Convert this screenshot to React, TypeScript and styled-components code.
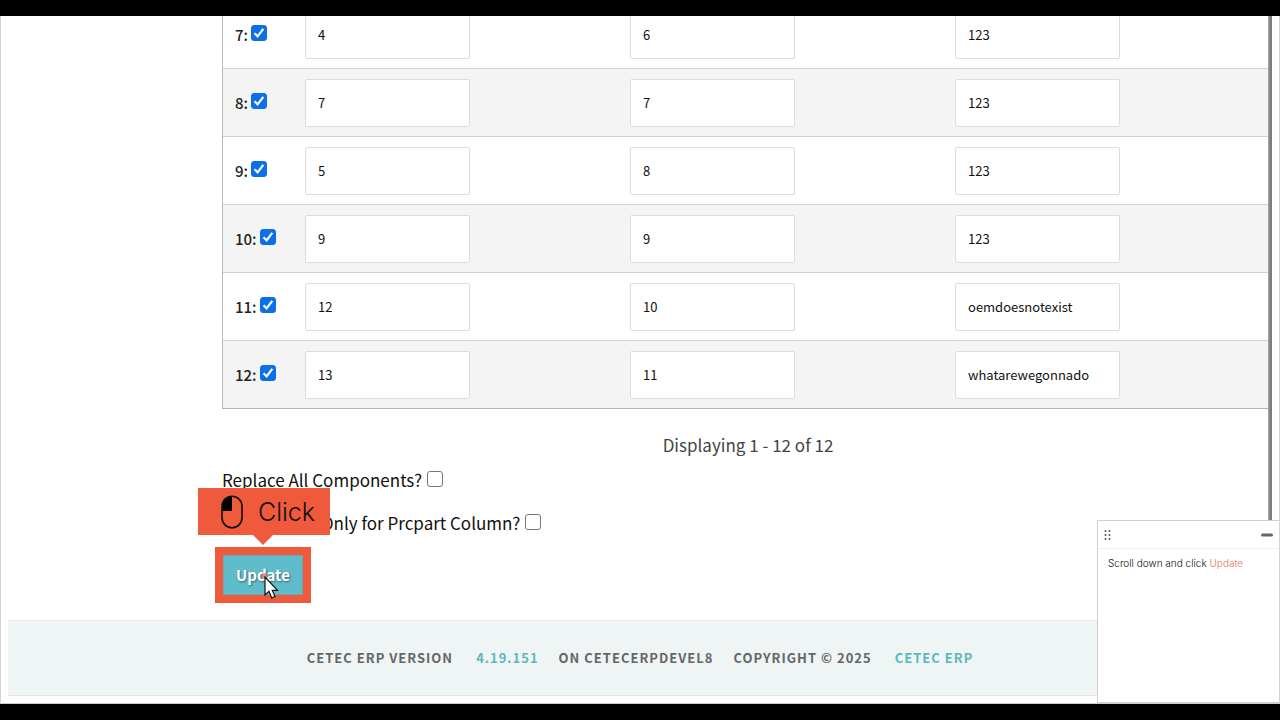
import React from "react";
import styled, { createGlobalStyle } from "styled-components";

const accent = "#f05a3c";
const teal = "#5cb8bc";

const GlobalStyle = createGlobalStyle`
  *, *::before, *::after { box-sizing: border-box; }
  body {
    margin: 0;
    background: #000;
    color: #222;
    font-family: "Noto Sans CJK SC", "Noto Sans", sans-serif;
  }
`;

const Page = styled.div`
  display: flex;
  flex-direction: column;
  min-height: 100vh;
  padding: 16px 0;
  background: #000;
`;

const Screen = styled.main`
  position: relative;
  flex: 1;
  display: flex;
  flex-direction: column;
  overflow: hidden;
  background: #fff;
  border-left: 1px solid #d4d4d4;
  border-right: 1px solid #d4d4d4;
  border-bottom: 1px solid #ccc;
`;

const Content = styled.div`
  flex: 1;
  display: flex;
  padding: 0 7px 0 221px;
`;

const Column = styled.section`
  flex: 1;
  min-width: 0;
`;

const Rail = styled.div`
  width: 4px;
  margin-bottom: 16px;
  background: linear-gradient(to right, #aaa, #888 40%, #777);
`;

const PartsTable = styled.table`
  width: 100%;
  margin-top: -15px;
  table-layout: fixed;
  border-spacing: 0;
  border-left: 1px solid #bbb;
`;

const Row = styled.tr`
  background: #fff;
  &:nth-child(even) { background: #f4f4f4; }
`;

const Cell = styled.td`
  height: 68px;
  padding: 10px 12px 9px;
  border-bottom: 1px solid #d2d2d2;
  vertical-align: middle;
  tr:last-child > & { border-bottom-color: #b4b4b4; }
`;

const IndexCell = styled(Cell)`
  width: 70px;
`;

const RowLabel = styled.label`
  display: flex;
  align-items: center;
  gap: 3px;
  font-size: 15px;
  line-height: 24px;
  font-weight: 500;
`;

const Check = styled.input`
  appearance: none;
  flex: none;
  width: 16px;
  height: 16px;
  margin: 0 0 4px;
  border: 1px solid #777;
  border-radius: 3px;
  background: #fff;
  &:checked {
    border-color: #0b70ea;
    background: #0b70ea;
  }
`;

const CheckWrap = styled.span`
  position: relative;
  display: flex;
`;

const Tick = styled.svg`
  position: absolute;
  left: 0;
  top: 0;
  pointer-events: none;
`;

const Field = styled.input`
  display: block;
  width: 165px;
  height: 48px;
  padding: 0 12px 2px;
  border: 1px solid #ddd;
  border-radius: 2px;
  background: #fff;
  color: #111;
  font: 400 13px/20px "Noto Sans CJK SC", "Noto Sans", sans-serif;
`;

const Summary = styled.p`
  margin: 24px 0 0;
  padding-left: 6px;
  text-align: center;
  font-size: 17px;
  line-height: 24px;
  color: #444;
`;

const Option = styled.label<{ $indent?: boolean }>`
  display: flex;
  align-items: center;
  gap: 5px;
  margin-top: ${(p) => (p.$indent ? 19 : 11)}px;
  padding-left: ${(p) => (p.$indent ? 99 : 0)}px;
  color: #111;
  font-size: 17px;
  line-height: 24px;
  & > input { margin-bottom: 2px; }
`;

const Target = styled.div`
  position: relative;
  display: flex;
  width: fit-content;
  margin: 12px 0 17px -7px;
  border: 8px solid ${accent};
`;

const UpdateButton = styled.button`
  height: 40px;
  padding: 0 12px;
  border: 1px solid #67aab2;
  background: #5fbccb;
  color: #fff;
  font: 700 15px/24px "Noto Sans CJK SC", "Noto Sans", sans-serif;
  text-shadow: 1px 1px 2px rgba(0, 0, 0, 0.45);
`;

const Callout = styled.div`
  position: absolute;
  left: -25px;
  bottom: 60px;
  display: flex;
  align-items: center;
  gap: 15px;
  width: 132px;
  height: 47px;
  padding-left: 23px;
  background: ${accent};
  color: #111;
  font: 300 25px/32px Inter, sans-serif;
  &::after {
    content: "";
    position: absolute;
    left: 55px;
    top: 100%;
    border: 10px solid transparent;
    border-top-color: ${accent};
    border-bottom: 0;
  }
`;

const Pointer = styled.svg`
  position: absolute;
  left: 38px;
  top: 16px;
  pointer-events: none;
`;

const Footer = styled.footer`
  display: flex;
  justify-content: center;
  align-items: center;
  gap: 20px;
  height: 76px;
  margin: 0 7px 7px;
  background: #eff4f5;
  border-top: 1px solid #e6eaeb;
  border-bottom: 1px solid #e0e5e6;
  color: #666;
  font-size: 13px;
  line-height: 20px;
  font-weight: 700;
  letter-spacing: 1px;
`;

const FooterLink = styled.a`
  margin-left: 3px;
  color: ${teal};
  text-decoration: none;
`;

const Guide = styled.aside`
  position: absolute;
  right: 0;
  bottom: 0;
  width: 182px;
  height: 183px;
  background: #fff;
  border: 1px solid #d0d0d0;
  border-right: 0;
  font-family: Inter, sans-serif;
`;

const GuideBar = styled.header`
  display: flex;
  align-items: center;
  justify-content: space-between;
  height: 28px;
  padding: 0 6px 0 6px;
  border-bottom: 1px solid #f0f0f0;
`;

const Minimise = styled.button`
  display: flex;
  padding: 0;
  border: 0;
  background: none;
`;

const GuideText = styled.p`
  margin: 5px 10px;
  font-size: 10px;
  font-weight: 300;
  line-height: 18px;
  color: #111;
`;

const Accent = styled.span`
  color: #e5705a;
`;

const rows: [number, string, string, string][] = [
  [7, "4", "6", "123"],
  [8, "7", "7", "123"],
  [9, "5", "8", "123"],
  [10, "9", "9", "123"],
  [11, "12", "10", "oemdoesnotexist"],
  [12, "13", "11", "whatarewegonnado"],
];

export default function App() {
  return (
    <Page>
      <GlobalStyle />
      <Screen>
        <Content>
          <Column>
            <PartsTable>
              <tbody>
                {rows.map(([n, ...values]) => (
                  <Row key={n}>
                    <IndexCell>
                      <RowLabel>
                        {n}:
                        <CheckWrap>
                          <Check type="checkbox" defaultChecked />
                          <Tick width="16" height="16" viewBox="0 0 16 16" fill="none" stroke="#fff" strokeWidth="2.2">
                            <path d="M3.5 8.3 6.6 11.4 12.3 3.8" />
                          </Tick>
                        </CheckWrap>
                      </RowLabel>
                    </IndexCell>
                    {values.map((v, i) => (
                      <Cell key={i}>
                        <Field defaultValue={v} aria-label={`Row ${n}, column ${i + 1}`} />
                      </Cell>
                    ))}
                  </Row>
                ))}
              </tbody>
            </PartsTable>
            <Summary>Displaying 1 - 12 of 12</Summary>
            <Option>
              Replace All Components?
              <Check type="checkbox" />
            </Option>
            <Option $indent>
              Only for Prcpart Column?
              <Check type="checkbox" />
            </Option>
            <Target>
              <UpdateButton type="button">Update</UpdateButton>
              <Callout>
                <svg width="22" height="34" viewBox="0 0 22 34" fill="none">
                  <path d="M11 1.5H10C5 1.5 1.2 5.4 1.2 10.5V16H11Z" fill="#000" />
                  <rect x="1" y="1.2" width="20" height="31.6" rx="10" stroke="#111" strokeWidth="1.6" />
                </svg>
                Click
              </Callout>
              <Pointer width="20" height="30" viewBox="0 0 20 30">
                <circle cx="3" cy="5" r="3" fill="#e8705c" opacity="0.7" />
                <path
                  d="M4 6V24L8 20.3L10.7 27L14 25.6L11.3 19.3H16.5Z"
                  fill="#fff"
                  stroke="#111"
                  strokeWidth="1.2"
                />
              </Pointer>
            </Target>
          </Column>
          <Rail />
        </Content>
        <Footer>
          <span>CETEC ERP VERSION</span>
          <FooterLink href="#version">4.19.151</FooterLink>
          <span>ON CETECERPDEVEL8</span>
          <span>COPYRIGHT © 2025</span>
          <FooterLink href="#cetec">CETEC ERP</FooterLink>
        </Footer>
        <Guide>
          <GuideBar>
            <svg width="8" height="12" viewBox="0 0 8 12" fill="#555">
              {[2, 6, 10].map((y) => (
                <React.Fragment key={y}>
                  <circle cx="1.5" cy={y} r="1" />
                  <circle cx="5.5" cy={y} r="1" />
                </React.Fragment>
              ))}
            </svg>
            <Minimise type="button" aria-label="Minimise">
              <svg width="12" height="4" viewBox="0 0 12 4">
                <rect y="0.5" width="12" height="3" rx="1.5" fill="#666" />
              </svg>
            </Minimise>
          </GuideBar>
          <GuideText>
            Scroll down and click <Accent>Update</Accent>
          </GuideText>
        </Guide>
      </Screen>
    </Page>
  );
}
